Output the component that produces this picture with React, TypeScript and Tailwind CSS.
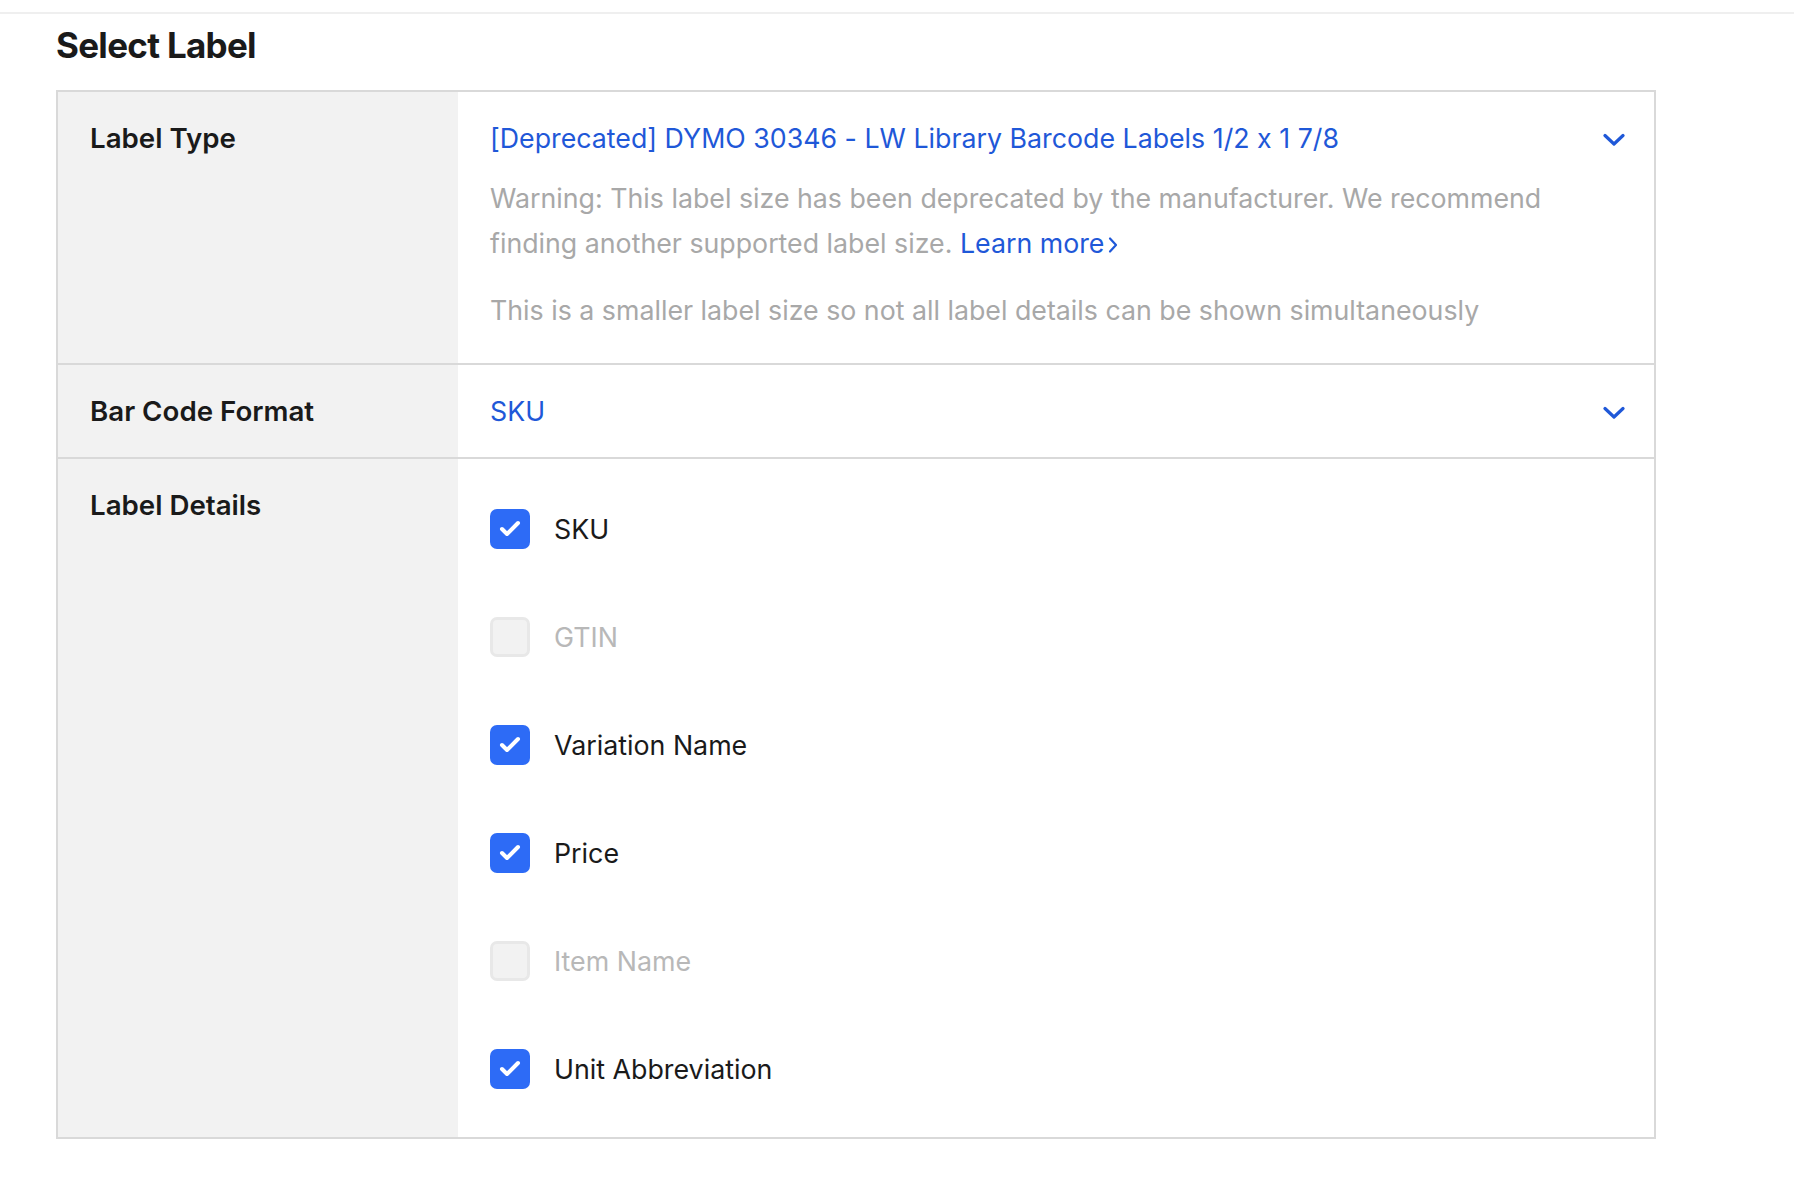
import { Check } from "lucide-react";

const font = { fontFamily: "Inter, 'Noto Sans', sans-serif" };

function Chevron() {
  return (
    <svg width="22" height="14" viewBox="0 0 22 14" fill="none" className="mt-[4px] shrink-0">
      <path d="M2 2.5 L11 11 L20 2.5" stroke="#1f58d8" strokeWidth="3.2" strokeLinecap="round" strokeLinejoin="round" />
    </svg>
  );
}

function Option({ label, checked }: { label: string; checked: boolean }) {
  return (
    <div className="flex h-[40px] items-center gap-[24px]">
      {checked ? (
        <span className="flex size-[40px] items-center justify-center rounded-[7px] bg-[#2d6bf6]">
          <Check className="size-[24px] text-white" strokeWidth={4} />
        </span>
      ) : (
        <span className="size-[40px] rounded-[7px] border-[3px] border-[#e8e8e8] bg-[#f2f2f2]" />
      )}
      <span className={checked ? "text-[26.8px] text-[#1a1a1a]" : "text-[26.8px] text-[#b8b8b8]"}>{label}</span>
    </div>
  );
}

function Row({ label, children, last }: { label: string; children: React.ReactNode; last?: boolean }) {
  return (
    <div className={last ? "flex" : "flex border-b-2 border-[#d9d9d9]"}>
      <div className="w-[400px] shrink-0 bg-[#f2f2f2] px-[32px] py-[24px]">
        <div className="text-[27.7px] leading-[44px] font-semibold text-[#1a1a1a]">{label}</div>
      </div>
      <div className="flex-1 bg-white">{children}</div>
    </div>
  );
}

export default function App() {
  const options = [
    { label: "SKU", checked: true },
    { label: "GTIN", checked: false },
    { label: "Variation Name", checked: true },
    { label: "Price", checked: true },
    { label: "Item Name", checked: false },
    { label: "Unit Abbreviation", checked: true },
  ];

  return (
    <div className="min-h-screen bg-white [font-feature-settings:'calt'_0]" style={font}>
      <div className="h-[12px]" />
      <div className="border-t-2 border-[#efefef] pl-[56px]">
        <h1 className="pt-[11px] text-[35px] leading-[40px] font-bold tracking-[-0.02em] text-[#1a1a1a]">Select Label</h1>
        <div className="mt-[25px] w-[1600px] border-2 border-[#d9d9d9]">
          <Row label="Label Type">
            <div className="pt-[24px] pr-[29px] pb-[31px] pl-[32px]">
              <div className="flex items-center justify-between">
                <span className="text-[26.75px] leading-[44px] text-[#1f58d8]">
                  [Deprecated] DYMO 30346 - LW Library Barcode Labels 1/2 x 1 7/8
                </span>
                <Chevron />
              </div>
              <p className="mt-[16px] text-[26.75px] leading-[45px] text-[#a8a8a8]">
                Warning: This label size has been deprecated by the manufacturer. We recommend
                <br />
                finding another supported label size.{" "}
                <a className="text-[#1f58d8]">
                  Learn more
                  <svg width="12" height="18" viewBox="0 0 12 18" fill="none" className="ml-[3px] inline-block align-[-1px]">
                    <path d="M3 2.5 L9 9 L3 15.5" stroke="#1f58d8" strokeWidth="2.2" strokeLinecap="round" strokeLinejoin="round" />
                  </svg>
                </a>
              </p>
              <p className="mt-[22px] text-[26.75px] leading-[44px] text-[#a8a8a8]">
                This is a smaller label size so not all label details can be shown simultaneously
              </p>
            </div>
          </Row>
          <Row label="Bar Code Format">
            <div className="flex items-center justify-between py-[24px] pr-[29px] pl-[32px]">
              <span className="text-[26.75px] leading-[44px] text-[#1f58d8]">SKU</span>
              <Chevron />
            </div>
          </Row>
          <Row label="Label Details" last>
            <div className="flex flex-col gap-[68px] px-[32px] pt-[50px] pb-[48px]">
              {options.map((o) => (
                <Option key={o.label} label={o.label} checked={o.checked} />
              ))}
            </div>
          </Row>
        </div>
      </div>
    </div>
  );
}
